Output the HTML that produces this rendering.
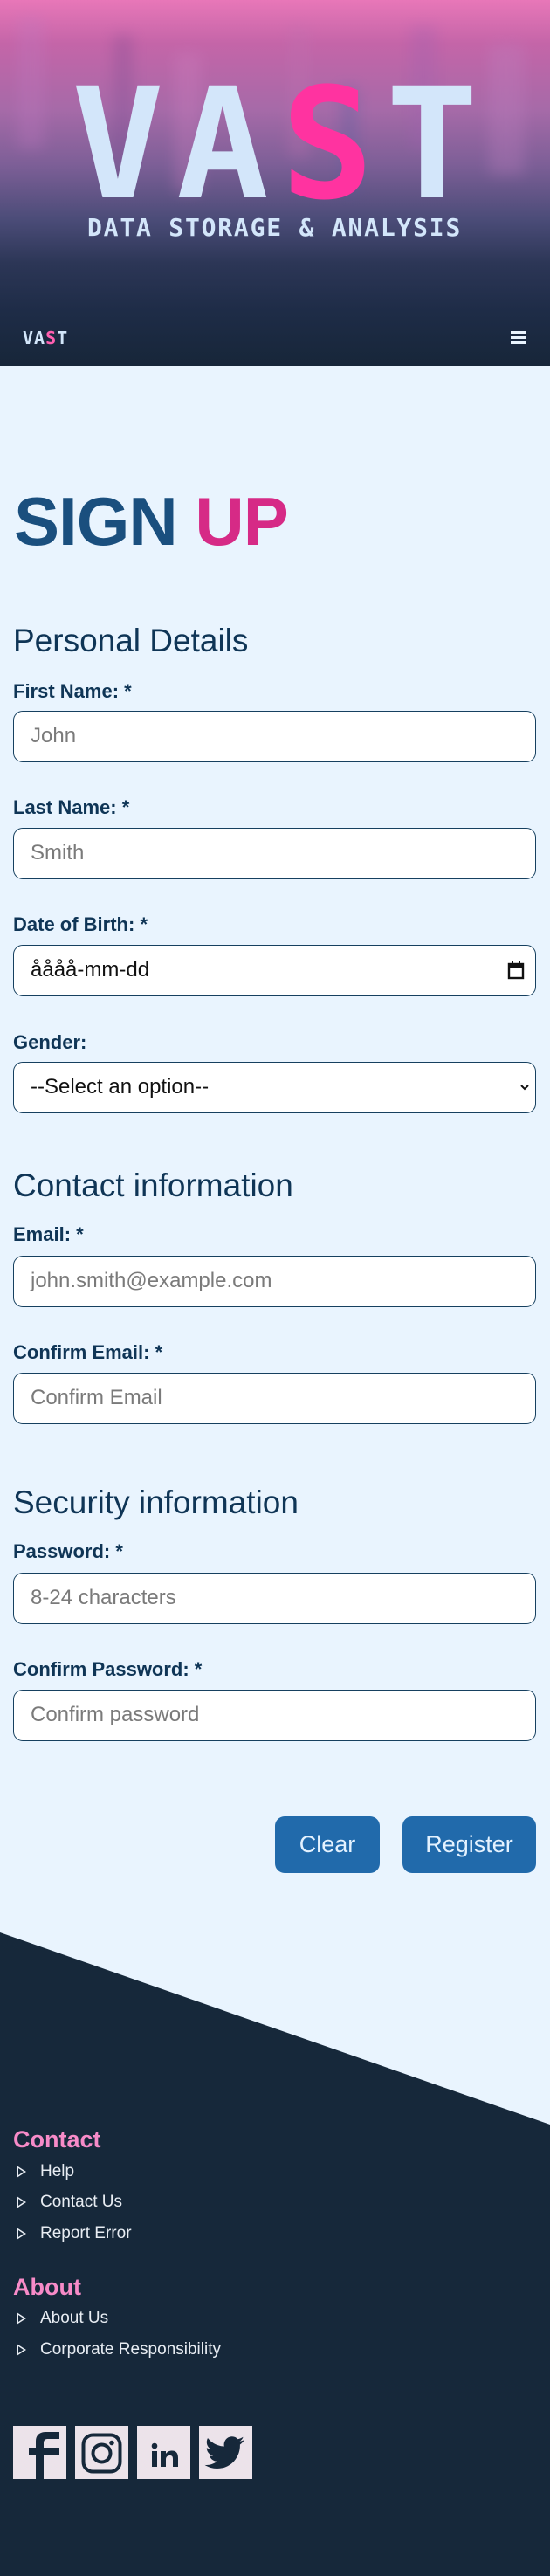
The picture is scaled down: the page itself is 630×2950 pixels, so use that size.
<!DOCTYPE html>
<html><head><meta charset="utf-8">
<style>
*{margin:0;padding:0;box-sizing:border-box}
body{width:630px;height:2950px;background:#e9f4fe;font-family:"Liberation Sans",sans-serif;position:relative;overflow:hidden}
.abs{position:absolute}
header{position:absolute;left:0;top:0;width:630px;height:419px;background:linear-gradient(180deg,#e877b8 0%,#c465a8 12%,#a66aa8 30%,#7d5f97 45%,#4b4c78 60%,#2c3656 72%,#1e2c47 85%,#172639 100%);overflow:hidden}
.bar{position:absolute;filter:blur(8px);opacity:.3}
.big{position:absolute;left:82px;top:78px;font-family:"DejaVu Sans Mono",monospace;font-weight:bold;font-size:176px;line-height:176px;color:#d3e6fa;letter-spacing:14px;white-space:nowrap}
.big span{color:#ff33a0}
.sub{position:absolute;left:100px;top:245px;font-family:"DejaVu Sans Mono",monospace;font-weight:bold;font-size:28px;line-height:32px;color:#d3e6fa;letter-spacing:1.8px;white-space:nowrap}
.logo{position:absolute;left:26px;top:375px;font-family:"DejaVu Sans Mono",monospace;font-weight:bold;font-size:20px;color:#d3e6fa;letter-spacing:1px}
.logo span{color:#ff5fb0}
.ham{position:absolute;left:585px;width:17px;height:3px;background:#e9f4fe}
h1{position:absolute;left:16px;top:552px;font-size:78px;line-height:90px;font-weight:bold;color:#1a4f7e;letter-spacing:-1px}
h1 span{color:#d62a86}
.h2{position:absolute;left:15px;font-size:37px;line-height:44px;color:#0f3556}
.lab{position:absolute;left:15px;font-size:22px;line-height:26px;font-weight:bold;color:#0f3556}
.inp{position:absolute;left:15px;width:599px;height:59px;background:#fff;border:1.5px solid #16405f;border-radius:11px;font-size:24px;line-height:56px;padding-left:19px;color:#7a7a7a}
.inp.v{color:#111}
.btn{position:absolute;top:2080px;height:65px;background:#216aab;border-radius:11px;color:#e4f2ff;font-size:27px;line-height:65px;text-align:center}
.fh{position:absolute;left:15px;font-size:27px;line-height:32px;font-weight:bold;color:#f78bc8}
.fl{position:absolute;left:46px;font-size:19px;line-height:24px;color:#e8edf3}
.tri{position:absolute;left:19px;width:0;height:0;border-left:11px solid #e8edf3;border-top:7px solid transparent;border-bottom:7px solid transparent}
.tri:after{content:"";position:absolute;left:-9px;top:-4px;border-left:6px solid #16283a;border-top:4px solid transparent;border-bottom:4px solid transparent}
.soc{position:absolute;top:2778px;width:61px;height:61px;background:#ece3ea}
</style></head><body>
<header>
<div class="bar" style="left:20px;top:20px;width:30px;height:150px;background:#c078c0"></div>
<div class="bar" style="left:130px;top:40px;width:22px;height:140px;background:#7a4a90"></div>
<div class="bar" style="left:200px;top:60px;width:30px;height:160px;background:#d080c0"></div>
<div class="bar" style="left:330px;top:30px;width:25px;height:150px;background:#c070b0"></div>
<div class="bar" style="left:390px;top:100px;width:20px;height:120px;background:#5060a0"></div>
<div class="bar" style="left:470px;top:30px;width:30px;height:140px;background:#a060b0"></div>
<div class="bar" style="left:560px;top:50px;width:40px;height:150px;background:#c080c0"></div>
<div class="big">VA<span>S</span>T</div>
<div class="sub">DATA STORAGE &amp; ANALYSIS</div>
<div class="logo">VA<span>S</span>T</div>
<div class="ham" style="top:379px"></div><div class="ham" style="top:385px"></div><div class="ham" style="top:391px"></div>
</header>

<h1>SIGN <span>UP</span></h1>

<div class="h2" style="top:712px">Personal Details</div>
<div class="lab" style="top:779px">First Name: *</div>
<div class="inp" style="top:814px">John</div>
<div class="lab" style="top:912px">Last Name: *</div>
<div class="inp" style="top:948px">Smith</div>
<div class="lab" style="top:1046px">Date of Birth: *</div>
<div class="inp v" style="top:1082px">åååå-mm-dd
<svg class="abs" style="left:565px;top:17px" width="20" height="22" viewBox="0 0 20 22"><rect x="2" y="4" width="16" height="16" fill="none" stroke="#111" stroke-width="2.4"/><rect x="2" y="4" width="16" height="4" fill="#111"/><rect x="5" y="1" width="2" height="4" fill="#111"/><rect x="13" y="1" width="2" height="4" fill="#111"/></svg></div>
<div class="lab" style="top:1181px">Gender:</div>
<div class="inp v" style="top:1216px">--Select an option--
<svg class="abs" style="left:580px;top:24px" width="10" height="8" viewBox="0 0 10 8"><path d="M1 2 L5 6 L9 2" fill="none" stroke="#111" stroke-width="2"/></svg></div>

<div class="h2" style="top:1336px">Contact information</div>
<div class="lab" style="top:1401px">Email: *</div>
<div class="inp" style="top:1438px">john.smith@example.com</div>
<div class="lab" style="top:1536px">Confirm Email: *</div>
<div class="inp" style="top:1572px">Confirm Email</div>

<div class="h2" style="top:1699px">Security information</div>
<div class="lab" style="top:1764px">Password: *</div>
<div class="inp" style="top:1801px">8-24 characters</div>
<div class="lab" style="top:1899px">Confirm Password: *</div>
<div class="inp" style="top:1935px">Confirm password</div>

<div class="btn" style="left:315px;width:120px">Clear</div>
<div class="btn" style="left:461px;width:153px">Register</div>

<svg class="abs" style="left:0;top:2213px" width="630" height="737" viewBox="0 0 630 737"><path d="M0 0 L630 220 L630 737 L0 737 Z" fill="#16283a"/></svg>

<div class="fh" style="top:2434px">Contact</div>
<div class="tri" style="top:2480px"></div><div class="fl" style="top:2475px">Help</div>
<div class="tri" style="top:2515px"></div><div class="fl" style="top:2510px">Contact Us</div>
<div class="tri" style="top:2551px"></div><div class="fl" style="top:2546px">Report Error</div>
<div class="fh" style="top:2603px">About</div>
<div class="tri" style="top:2648px"></div><div class="fl" style="top:2643px">About Us</div>
<div class="tri" style="top:2684px"></div><div class="fl" style="top:2679px">Corporate Responsibility</div>

<div class="soc" style="left:15px"><svg width="61" height="61" viewBox="0 0 61 61"><path d="M26 61 V33 H18 V25 H26 V18 C26 10 31 7 38 7 H53 V15 H40 C36 15 35 17 35 20 V25 H53 V33 H35 V61 Z" fill="#16283a"/></svg></div>
<div class="soc" style="left:86px"><svg width="61" height="61" viewBox="0 0 61 61"><rect x="9.5" y="10.5" width="42" height="42" rx="11" fill="none" stroke="#16283a" stroke-width="4"/><circle cx="30.5" cy="31.5" r="10" fill="none" stroke="#16283a" stroke-width="4"/><circle cx="42" cy="19.5" r="2.8" fill="#16283a"/></svg></div>
<div class="soc" style="left:157px"><svg width="61" height="61" viewBox="0 0 61 61"><circle cx="20" cy="23" r="3.3" fill="#16283a"/><rect x="17" y="29" width="6" height="18" fill="#16283a"/><path d="M27 29 H33 V32 C35 29 38 28.5 40 28.5 C45 28.5 47 31.5 47 37 V47 H41 V38 C41 35 40 34 37.5 34 C35 34 33 35.5 33 38.5 V47 H27 Z" fill="#16283a"/></svg></div>
<div class="soc" style="left:228px"><svg width="61" height="61" viewBox="0 0 61 61"><path d="M52 16 C50 17 48.5 17.5 46.5 17.8 C48.5 16.5 50 14.8 50.5 12.8 C48.7 14 46.7 14.7 44.5 15.2 C42.8 13.4 40.4 12.3 37.8 12.3 C32.7 12.3 28.6 16.4 28.6 21.5 C28.6 22.2 28.7 22.9 28.8 23.6 C21.2 23.2 14.4 19.6 10 14 C9.2 15.4 8.8 17 8.8 18.6 C8.8 21.8 10.4 24.6 12.9 26.3 C11.4 26.2 10 25.8 8.8 25.2 C8.8 29.7 12 33.4 16.2 34.3 C14.8 34.7 13.4 34.7 12 34.4 C13.2 38.1 16.6 40.7 20.6 40.8 C16.5 44 11.4 45.5 6.5 44.9 C10.8 47.6 15.6 49 20.6 49 C37.6 49 46.9 34.9 46.9 22.7 L46.9 21.5 C48.8 20.1 50.5 18.3 52 16 Z" fill="#16283a"/></svg></div>
</body></html>
